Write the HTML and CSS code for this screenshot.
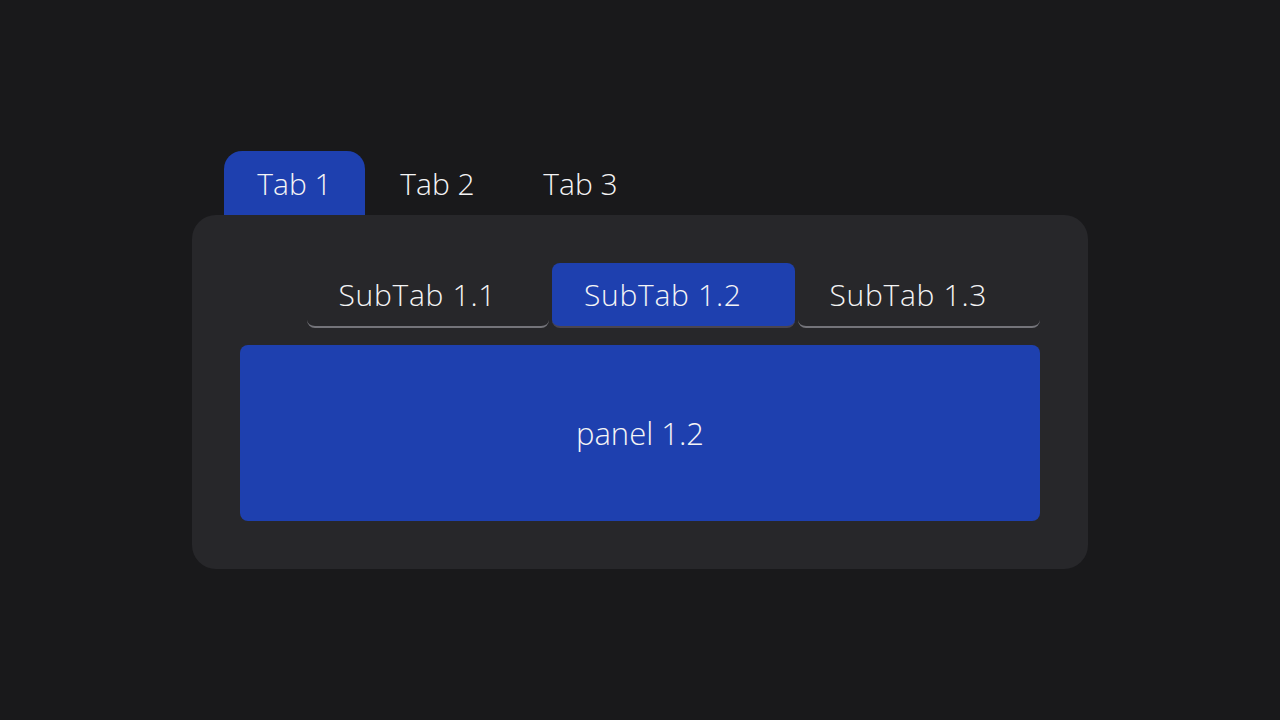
FILE: index.html
```html
<!DOCTYPE html>
<html lang="en">
<head>
  <meta charset="UTF-8">
  <title>Tabs</title>
  <link rel="stylesheet" href="styles.css">
</head>
<body>

  <div class="tabs">
    <div class="tabbar">
      <div class="tab active">Tab 1</div>
      <div class="tab">Tab 2</div>
      <div class="tab">Tab 3</div>
    </div>

    <div class="card">
      <div class="subtabbar">
        <div class="subtab">SubTab 1.1</div>
        <div class="subtab active">SubTab 1.2</div>
        <div class="subtab">SubTab 1.3</div>
      </div>
      <div class="panel">panel 1.2</div>
    </div>
  </div>

</body>
</html>
```

FILE: styles.css
```css
body {
  margin: 0;
  height: 720px;
  background-color: #19191b;
  font-family: 'Open Sans', 'Noto Sans', sans-serif;
  font-weight: 300;
  color: #f4f4f5;
}
.tabs {
  width: 896px;
  padding-top: 151px;
  margin-left: 192px;
}
.tabbar {
  display: flex;
  padding-left: 32px;
}
.tab {
  width: 141px;
  height: 64px;
  display: flex;
  align-items: center;
  justify-content: center;
  font-size: 30px;
  border-radius: 18px 18px 0 0;
  margin-right: 2px;
}
.tab.active {
  background-color: #1e40af;
}
.card {
  background-color: #27272a;
  border-radius: 24px;
  padding: 48px;
}
.subtabbar {
  display: flex;
  justify-content: flex-end;
  gap: 3px;
  margin-bottom: 17px;
}
.subtab {
  width: 242.5px;
  height: 65px;
  box-sizing: border-box;
  padding-left: 32px;
  display: flex;
  align-items: center;
  font-size: 30px;
  letter-spacing: 0.7px;
  border-bottom: 2px solid #74747a;
  border-radius: 8px;
}
.subtab.active {
  background-color: #1e40af;
  border-bottom-color: #4a4550;
}
.panel {
  height: 176px;
  background-color: #1e40af;
  border-radius: 8px;
  display: flex;
  align-items: center;
  justify-content: center;
  font-size: 31px;
}
```
